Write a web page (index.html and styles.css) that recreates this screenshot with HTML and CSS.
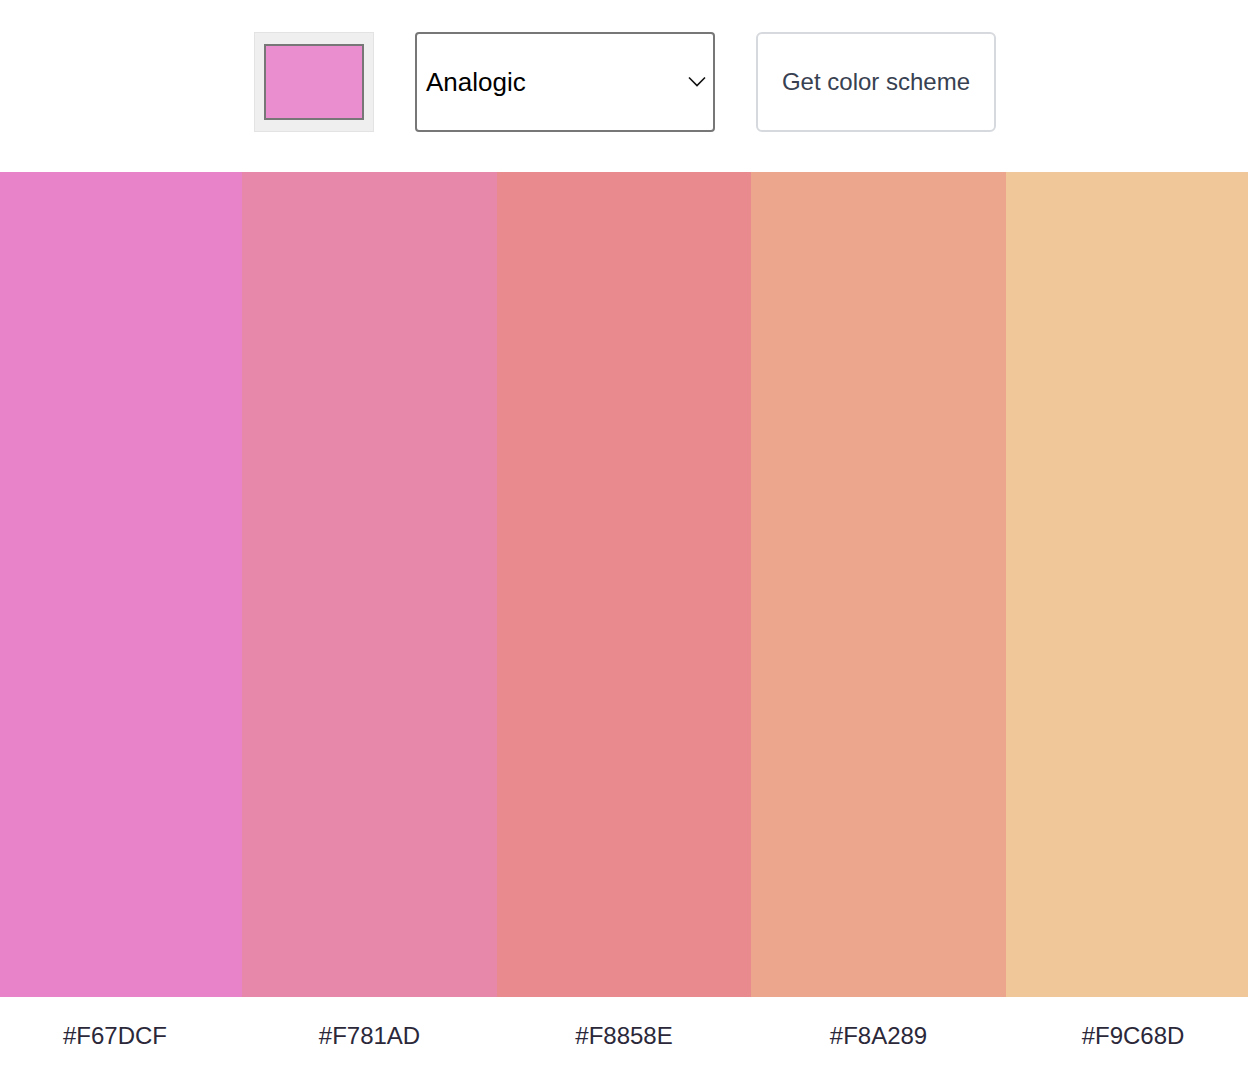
FILE: index.html
```html
<!DOCTYPE html>
<html lang="en">
<head>
<meta charset="utf-8">
<title>Color Scheme</title>
<link rel="stylesheet" href="styles.css">
</head>
<body>
<header class="controls">
  <div class="color-input"><div class="color-swatch"></div></div>
  <div class="select">
    <span class="select-value">Analogic</span>
    <svg class="chevron" width="18" height="11" viewBox="0 0 18 11"><path d="M1 1.5 L9 9.5 L17 1.5" fill="none" stroke="#111" stroke-width="1.6"/></svg>
  </div>
  <button class="btn">Get color scheme</button>
</header>
<main class="palette">
  <div class="col"><div class="bar c1"></div><div class="label">#F67DCF</div></div>
  <div class="col"><div class="bar c2"></div><div class="label">#F781AD</div></div>
  <div class="col"><div class="bar c3"></div><div class="label">#F8858E</div></div>
  <div class="col"><div class="bar c4"></div><div class="label">#F8A289</div></div>
  <div class="col"><div class="bar c5"></div><div class="label">#F9C68D</div></div>
</main>
</body>
</html>
```
FILE: styles.css
```css
html, body {
  margin: 0;
  padding: 0;
  background: #fff;
  overflow-x: hidden;
}
body {
  font-family: "Liberation Sans", Arial, sans-serif;
}
.controls {
  display: flex;
  justify-content: center;
  align-items: center;
  gap: 41px;
  padding: 32px 0 40px 2px;
  height: 100px;
}
.color-input {
  box-sizing: border-box;
  width: 120px;
  height: 100px;
  background: #efefef;
  border: 1px solid #e3e3e3;
  padding: 11px 9px;
}
.color-swatch {
  box-sizing: border-box;
  width: 100px;
  height: 76px;
  background: #ea8ecf;
  border: 2px solid #777;
}
.select {
  box-sizing: border-box;
  width: 300px;
  height: 100px;
  border: 2px solid #777;
  border-radius: 4px;
  display: flex;
  align-items: center;
  justify-content: space-between;
  padding: 0 7px 0 9px;
}
.select-value {
  font-size: 26px;
  color: #000;
}
.chevron {
  display: block;
  margin-top: -2px;
}
.btn {
  box-sizing: border-box;
  width: 240px;
  height: 100px;
  background: #fff;
  border: 2px solid #d6d9de;
  border-radius: 6px;
  font-family: "Liberation Sans", Arial, sans-serif;
  font-size: 24px;
  color: #374151;
  padding: 0;
}
.palette {
  display: flex;
  justify-content: center;
}
.col {
  flex: 0 0 254.5px;
  display: flex;
  flex-direction: column;
}
.bar {
  height: 825px;
}
.c1 { background: #e883c9; }
.c2 { background: #e787aa; }
.c3 { background: #e98a8f; }
.c4 { background: #eba68d; }
.c5 { background: #f0c799; }
.label {
  height: 77px;
  display: flex;
  align-items: center;
  justify-content: center;
  font-size: 24px;
  color: #2b283a;
}
```
